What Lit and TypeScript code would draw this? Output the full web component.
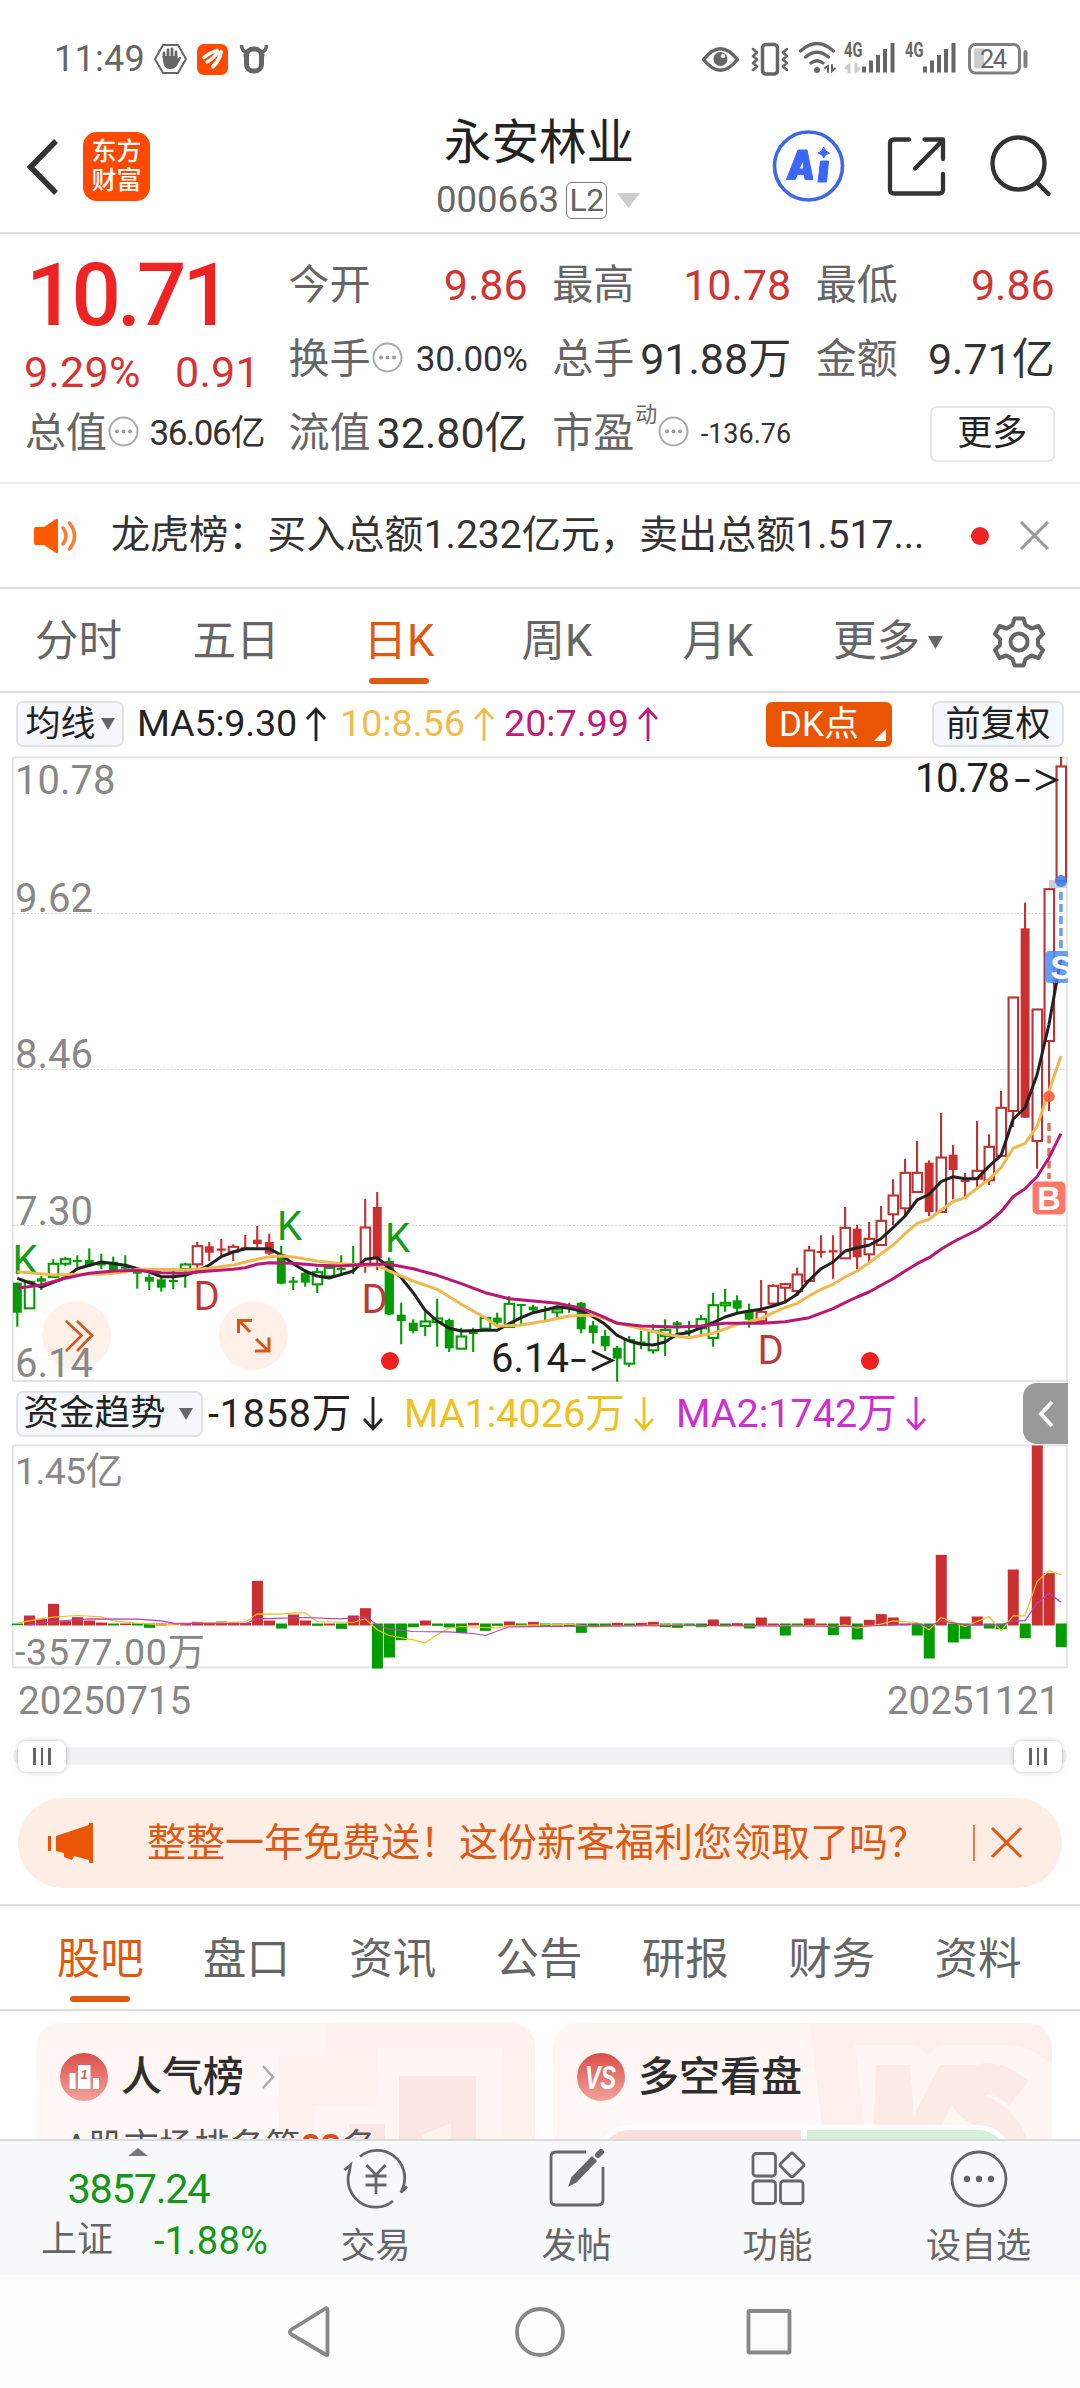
import { LitElement, html, svg, css } from "lit";
import { customElement, property } from "lit/decorators.js";
import { classMap } from "lit/directives/class-map.js";

const GREEN = "#009c00";
const RED = "#cb2f2f";

type Candle = [kind: string, top: number, bottom: number, high: number, low: number];

/* Levels are thirds of a pixel, measured down from the 7.66 level.
   F/f: falling solid/hollow, R/r: rising solid/hollow, x/X: cross. */
const CANDLES: Candle[] = [
  ["F", 425, 515, 425, 557], ["f", 422, 502, 418, 504], ["F", 412, 422, 405, 447], ["f", 367, 408, 355, 408],
  ["f", 353, 368, 347, 375], ["x", 360, 360, 343, 378], ["F", 357, 372, 322, 378], ["x", 370, 370, 338, 385],
  ["F", 362, 387, 347, 390], ["x", 380, 380, 343, 395], ["F", 390, 398, 385, 443], ["F", 408, 422, 400, 447],
  ["F", 415, 440, 405, 452], ["x", 420, 420, 380, 445], ["f", 369, 384, 365, 440], ["r", 314, 370, 303, 380],
  ["R", 316, 335, 303, 360], ["X", 326, 326, 293, 345], ["r", 316, 332, 310, 360], ["X", 322, 322, 282, 328],
  ["R", 296, 309, 255, 320], ["R", 303, 338, 278, 342], ["F", 340, 428, 315, 430], ["x", 422, 422, 408, 447],
  ["F", 395, 425, 385, 437], ["f", 392, 430, 380, 456], ["f", 379, 406, 375, 410], ["x", 384, 384, 343, 397],
  ["x", 370, 370, 315, 400], ["r", 258, 375, 173, 395], ["R", 198, 352, 153, 387], ["F", 360, 520, 350, 522],
  ["F", 521, 540, 485, 610], ["F", 545, 570, 535, 577], ["f", 540, 555, 512, 585], ["f", 531, 543, 473, 617],
  ["F", 537, 622, 533, 633], ["f", 585, 623, 560, 625], ["x", 576, 576, 560, 633], ["f", 529, 563, 527, 565],
  ["F", 530, 545, 515, 550], ["f", 487, 558, 465, 558], ["x", 492, 492, 490, 548], ["F", 497, 508, 492, 518],
  ["x", 507, 507, 495, 540], ["f", 504, 514, 500, 528], ["x", 495, 495, 485, 515], ["F", 485, 565, 483, 577],
  ["F", 553, 576, 540, 608], ["F", 585, 616, 567, 630], ["F", 620, 653, 615, 722], ["f", 596, 668, 585, 678],
  ["x", 605, 605, 570, 625], ["f", 570, 628, 550, 638], ["f", 565, 585, 535, 645], ["F", 544, 553, 540, 577],
  ["x", 571, 571, 540, 585], ["f", 533, 562, 522, 582], ["f", 491, 591, 455, 617], ["f", 484, 493, 443, 512],
  ["F", 478, 503, 463, 515], ["F", 511, 536, 488, 560], ["r", 511, 540, 417, 540], ["r", 433, 488, 430, 498],
  ["r", 428, 440, 425, 480], ["r", 399, 450, 380, 465], ["r", 327, 420, 315, 420], ["X", 333, 333, 283, 350],
  ["X", 331, 331, 283, 413], ["r", 259, 352, 198, 352], ["R", 263, 349, 252, 385], ["r", 292, 340, 243, 370],
  ["r", 238, 312, 195, 312], ["r", 162, 220, 115, 252], ["r", 94, 202, 53, 225], ["r", 94, 153, 0, 153],
  ["R", 65, 213, 58, 225], ["r", 48, 213, -85, 215], ["R", 41, 87, 12, 175], ["R", 115, 123, 96, 170],
  ["r", 88, 113, -60, 142], ["r", 16, 118, -20, 132], ["r", -101, 45, -150, 45], ["r", -432, -90, -433, -42],
  ["R", -638, -70, -715, -70], ["r", -396, 0, -397, 83], ["r", -757, -300, -758, -90], ["r", -1125, -780, -1152, -780],
];

type Pt = [number, number];
const MA5: Pt[] = [[0, 412], [2, 438], [4, 410], [5, 383], [7, 363], [9, 373], [11, 393], [12, 407], [13, 407], [14, 403], [15, 390], [16, 372], [17, 347], [18, 333], [19, 323], [21, 323], [22, 342], [23, 368], [24, 390], [25, 405], [26, 411], [28, 390], [29, 355], [30, 350], [31, 380], [32, 410], [33, 455], [34, 508], [35, 540], [36, 562], [37, 570], [39, 568], [40, 568], [41, 548], [42, 530], [43, 515], [44, 507], [45, 497], [46, 502], [47, 510], [48, 527], [49, 550], [50, 583], [51, 600], [52, 610], [53, 612], [54, 603], [55, 580], [56, 575], [57, 560], [58, 545], [59, 528], [60, 517], [61, 510], [62, 505], [63, 495], [64, 483], [65, 460], [66, 418], [67, 383], [68, 363], [69, 330], [70, 320], [71, 313], [72, 293], [73, 260], [74, 225], [75, 177], [76, 160], [77, 122], [78, 107], [79, 113], [80, 113], [81, 75], [82, 43], [83, -65], [84, -100], [85, -198], [86, -350], [87, -550]];
const MA10: Pt[] = [[0, 392], [3, 402], [5, 400], [7, 400], [9, 393], [10, 385], [12, 385], [14, 387], [16, 382], [18, 372], [20, 355], [21, 347], [22, 345], [23, 348], [25, 360], [27, 368], [29, 373], [30, 373], [31, 390], [33, 420], [35, 445], [37, 490], [38, 510], [39, 530], [40, 556], [42, 552], [44, 540], [46, 525], [48, 522], [50, 545], [52, 563], [54, 580], [56, 590], [58, 577], [60, 550], [62, 533], [63, 515], [64, 500], [65, 487], [66, 465], [67, 445], [68, 430], [69, 408], [70, 390], [71, 365], [72, 338], [73, 312], [74, 278], [75, 247], [76, 235], [77, 207], [78, 182], [79, 170], [80, 142], [81, 115], [82, 80], [83, 22], [84, 7], [85, -43], [86, -150], [87, -255]];
const MA20: Pt[] = [[0, 442], [2, 432], [4, 412], [6, 397], [8, 390], [10, 388], [12, 395], [14, 397], [16, 390], [18, 385], [19, 380], [20, 370], [21, 365], [23, 367], [25, 373], [27, 375], [29, 370], [31, 370], [33, 383], [35, 403], [37, 428], [39, 455], [41, 473], [43, 480], [45, 487], [47, 502], [48, 515], [49, 530], [50, 547], [52, 555], [55, 558], [57, 555], [59, 547], [61, 547], [62, 547], [64, 542], [66, 530], [68, 503], [69, 485], [70, 468], [71, 453], [72, 433], [73, 413], [74, 390], [75, 368], [76, 350], [77, 325], [78, 303], [79, 285], [80, 267], [81, 243], [82, 212], [83, 167], [84, 143], [85, 107], [86, 50], [87, -22]];

/* Net flow per day, in thirds of a pixel above the zero line. */
const FLOW = [-2, 27, 17, 62, 10, 22, 12, 6, -3, 2, -3, -10, 3, 2, 4, 8, 4, 9, 7, 5, 131, 12, -12, 30, 12, -4, 3, -13, 27, 49, -132, -99, -47, -8, 12, -4, -9, -26, 5, -19, -4, 9, -3, 8, -4, -3, -6, -25, -8, -4, 5, -3, 5, 8, -8, -10, -3, -8, 15, -6, 4, -12, 21, 3, -33, -3, 18, 3, -32, 24, -45, 14, 31, 21, 3, -33, -102, 209, -54, -43, 24, -12, -14, 165, -41, 537, 154, -68];
const FLOW_MA1: Pt[] = [[0, 4], [1, 11], [2, 17], [3, 22], [5, 27], [7, 23], [8, 11], [10, 4], [12, -1], [16, 6], [19, 7], [20, 32], [22, 31], [23, 35], [24, 35], [25, 9], [28, 6], [29, 17], [30, -16], [31, -33], [33, -46], [34, -55], [35, -31], [36, -11], [37, -6], [40, -11], [41, -3], [46, 1], [48, -7], [54, -1], [58, -4], [67, -3], [68, -8], [69, -1], [70, -11], [72, 1], [73, 11], [75, 6], [76, -16], [77, 21], [79, -6], [81, 24], [82, -19], [83, 26], [84, 26], [85, 129], [86, 161], [87, 149]];
const FLOW_MA2: Pt[] = [[1, -1], [3, 9], [6, 17], [10, 16], [12, 11], [13, 4], [19, 2], [20, 17], [24, 21], [27, 17], [29, 24], [30, -1], [31, -14], [33, -21], [36, -22], [38, -27], [39, -33], [41, -7], [47, -5], [58, -3], [70, -6], [75, 2], [76, -6], [77, 11], [79, -1], [82, -1], [83, 11], [84, 11], [85, 64], [86, 94], [87, 67]];

const xAt = (i: number) => 17.3 + i * 11.997;
const yAt = (v: number) => v / 3 + 386;
const yFlow = (v: number) => 180.5 - v / 3;
const line = (pts: Pt[], y: (v: number) => number) => pts.map(([i, v]) => `${xAt(i).toFixed(1)},${y(v).toFixed(1)}`).join(" ");

const arrow = (up: boolean) => html`<svg class="arrow" width="20" height="36" viewBox="0 0 20 36" fill="none" stroke="currentColor" stroke-width="2.8">
  ${up ? svg`<path d="M10 35V3M1 13l9-10 9 10" />` : svg`<path d="M10 1v32M1 23l9 10 9-10" />`}</svg>`;

const dots = html`<svg class="dots" width="31" height="31" viewBox="0 0 31 31"><circle cx="15.5" cy="15.5" r="14" fill="none" stroke="#aaa" stroke-width="2" /><g fill="#999"><circle cx="9" cy="15.5" r="1.9" /><circle cx="15.5" cy="15.5" r="1.9" /><circle cx="22" cy="15.5" r="1.9" /></g></svg>`;

const base = css`
  :host { display: block; font-family: Roboto, "Noto Sans CJK SC", sans-serif; line-height: 1; color: #333; }
  * { box-sizing: border-box; }
  svg { display: block; flex: none; }
`;

@customElement("status-bar")
class StatusBar extends LitElement {
  static styles = [base, css`
    .bar { height: 118px; padding: 0 48px 0 54px; display: flex; align-items: center; justify-content: space-between; color: #666; }
    .left { display: flex; align-items: center; }
    .time { font-size: 36px; width: 100px; letter-spacing: 0.3px; }
    text { font-family: Roboto, sans-serif; }
  `];
  render() {
    return html`<div class="bar">
      <div class="left">
        <span class="time">11:49</span>
        <svg width="115" height="34" viewBox="154 44 115 34">
          <path d="M163 47h15l8 14-8 14h-15l-8-14z" fill="none" stroke="#666" stroke-width="2" stroke-linejoin="round" />
          <path d="M164 60v-5M168 60v-8M172 60v-9M176 60v-6" stroke="#666" stroke-width="2.8" stroke-linecap="round" />
          <path d="M162.600 58h14.800v3l2-2q2-1 1.500 1.500l-4.500 8q-2 2.500-6 2.500-6 0-7-6z" fill="#666" />
          <rect x="197" y="46" width="31" height="31" rx="7" fill="#ff4a00" />
          <g fill="none" stroke="#fff" stroke-linecap="round"><path d="M204 59.500q5-4.500 13-7" stroke-width="3.500" /><path d="M207 64q6-3 11-10" stroke-width="3.500" /><path d="M213 68.500q6-5 8-14.500" stroke-width="4" /></g>
          <path d="M243.500 57h3M261 57h3.500" stroke="#666" stroke-width="3" /><rect x="246.500" y="51" width="15" height="22" rx="6.500" fill="none" stroke="#666" stroke-width="5" />
          <path d="M241.500 47q0 6 5 7M266.500 47q0 6-5 7" fill="none" stroke="#666" stroke-width="3.500" />
        </svg>
      </div>
      <svg width="332" height="40" viewBox="700 40 332 40" fill="none" stroke="#666" stroke-linecap="round">
        <path d="M703.500 60.500q17-21.500 34 0q-17 21.500-34 0z" stroke-width="3.300" stroke-linejoin="round" />
        <circle cx="720.500" cy="60" r="7" fill="#666" stroke="none" /><circle cx="723" cy="57" r="2.200" fill="#fff" stroke="none" />
        <rect x="762.500" y="45.500" width="15" height="29.500" rx="3.500" stroke-width="3.500" />
        <path d="M753 50l4 3.500-4 3.500 4 3.500-4 3.500 4 3.500-4 3.500M787 50l-4 3.500 4 3.500-4 3.500 4 3.500-4 3.500 4 3.500" stroke-width="2.500" stroke-linejoin="round" />
        <path d="M800.500 52q16.500-15 33 0M805.500 58q11.500-9.500 23 0M811 64q6-4.500 12 0" stroke-width="3.200" /><circle cx="817" cy="71" r="3" fill="#666" stroke="none" />
        <path d="M825 69l3-2v6M832 66v6l3-2.500" stroke-width="2" />
        <path d="M846 69l3-2.500v6.500M856 65v7l3-2.500" stroke="#ccc" stroke-width="3" />
        <g stroke="none" fill="#666" font-size="20" font-weight="700"><text x="844" y="57.500" textLength="18.500" lengthAdjust="spacingAndGlyphs">4G</text><text x="905" y="57.500" textLength="18.500" lengthAdjust="spacingAndGlyphs">4G</text></g>
        <path d="M864 67.500v6M871 61.500v12M878 56v17.500M885 50v23.500M892.500 44v29.500M925 67.500v6M932 61.500v12M939 56v17.500M946 50v23.500M953.500 44v29.500" stroke-width="4" stroke-linecap="butt" />
        <rect x="969.500" y="45.500" width="50" height="28.500" rx="6" stroke="#808080" stroke-width="3" />
        <path d="M976 49.500h8v20h-8q-2 0-2-2v-16q0-2 2-2z" fill="#ccc" stroke="none" />
        <path d="M1025.500 53v14" stroke="#808080" stroke-width="4" />
        <text x="980" y="69" font-size="25.500" fill="#666" stroke="none" textLength="27">24</text>
      </svg>
    </div>`;
  }
}

@customElement("stock-header")
class StockHeader extends LitElement {
  static styles = [base, css`
    .head { height: 116px; border-bottom: 2px solid #dcdcdc; display: grid; grid-template-columns: 300px 480px 300px; }
    .left { display: flex; align-items: center; padding: 0 0 17px 26px; gap: 24px; }
    .logo { width: 67px; height: 69px; border-radius: 14px; background: #ff4800; color: #fff; font-size: 25px; font-weight: 500; line-height: 29px; display: grid; place-content: center; text-align: center; padding-bottom: 2px; }
    .mid { display: flex; flex-direction: column; align-items: center; padding: 2px 2px 0 0; }
    .name { font-size: 47.500px; color: #222; font-weight: 400; }
    .code { display: flex; align-items: center; margin: 14px 0 0 -2px; font-size: 36.500px; color: #666; }
    .lv { width: 41px; height: 37px; border: 1.500px solid #777; border-radius: 6px; font-size: 32px; display: grid; place-content: center; margin: 0 10px 0 7px; letter-spacing: -0.500px; }
    .right { display: flex; justify-content: flex-end; padding: 10px 27px 0 0; }
  `];
  render() {
    return html`<div class="head">
      <div class="left">
        <svg width="33" height="56" viewBox="0 0 33 56" fill="none" stroke="#333" stroke-width="5.500"><path d="M30 2L4.500 28 30 54" /></svg>
        <div class="logo">东方<br />财富</div>
      </div>
      <div class="mid">
        <div class="name">永安林业</div>
        <div class="code">000663<span class="lv">L2</span><svg width="23" height="15" viewBox="0 0 23 15"><path d="M0 0h23L11.500 15z" fill="#ccc" /></svg></div>
      </div>
      <div class="right">
        <svg width="281" height="76" viewBox="772 128 281 76" fill="none">
          <circle cx="808.500" cy="166" r="34" stroke="#3f68e8" stroke-width="3.600" />
          <path d="M798 150h9l6 29.500h-8l-.500-5h-7l-2.500 5h-8.500zM799 169h4.800l-.6-9zM820.500 161h8l-2 21h-8.500zM823.700 147q1 5 5.800 6-4.800 1-5.800 5-1-4-5.500-5 4.500-1 5.500-6z" fill="#3a66fa" stroke="#3a66fa" stroke-width="1" stroke-linejoin="round" />
          <g stroke="#333" stroke-width="4.300" stroke-linecap="round" stroke-linejoin="round"><path d="M909 139.500h-15q-4 0-4 4v46q0 4 4 4h45q4 0 4-4v-15.500M924.500 139.500h18.500v19.500M942 141l-27 27.500" />
          <circle cx="1018.500" cy="163.500" r="26" /><path d="M1037 182.500l11.500 11.500" /></g>
        </svg>
      </div>
    </div>`;
  }
}

@customElement("quote-panel")
class QuotePanel extends LitElement {
  static styles = [base, css`
    .grid { height: 250px; padding: 14px 25px 0 26px; border-bottom: 2px solid #efefef; display: grid; grid-template-columns: repeat(4, 238px); grid-template-rows: repeat(3, 74px); column-gap: 25.600px; }
    .main { grid-row: 1 / 3; display: flex; flex-direction: column; color: #ee2424; }
    .price { font-size: 87px; font-weight: 500; letter-spacing: -4px; padding-top: 4px; height: 103px; }
    .chg { display: flex; justify-content: space-between; width: 236px; font-size: 43px; color: #d63333; margin-left: -2px; letter-spacing: 0.300px; }
    .cell { display: flex; align-items: center; padding-top: 1px; }
    .label { font-size: 41px; color: #666; margin-left: -1px; }
    .value { margin-left: auto; font-size: 43px; }
    .up { color: #cf3535; }
    .small { font-size: 35px; letter-spacing: -0.300px; }
    .value.narrow { font-size: 35px; letter-spacing: -1.400px; }
    .tiny { font-size: 27px; margin-top: 2px; }
    .dots { margin: -4px 0 0 1px; }
    .sup { font-size: 22px; color: #666; align-self: flex-start; margin: 7px 0 0 1px; }
    .more { margin-left: auto; width: 125px; height: 56px; border: 2px solid #e8e8e8; border-radius: 7px; font-size: 35px; display: grid; place-content: center; color: #222; }
  `];
  cell(label: string, value: string, size = "", up = false, info = false) {
    return html`<div class="cell"><span class="label">${label}</span>${info ? dots : ""}<span class=${classMap({ value: true, up, [size || "std"]: true })}>${value}</span></div>`;
  }
  render() {
    return html`<div class="grid">
      <div class="main"><div class="price">10.71</div><div class="chg"><span>9.29%</span><span>0.91</span></div></div>
      ${this.cell("今开", "9.86", "", true)}${this.cell("最高", "10.78", "", true)}${this.cell("最低", "9.86", "", true)}
      ${this.cell("换手", "30.00%", "small", false, true)}${this.cell("总手", "91.88万")}${this.cell("金额", "9.71亿")}
      ${this.cell("总值", "36.06亿", "narrow", false, true)}${this.cell("流值", "32.80亿")}
      <div class="cell"><span class="label">市盈</span><span class="sup">动</span>${dots}<span class="value tiny">-136.76</span></div>
      <div class="cell"><span class="more">更多</span></div>
    </div>`;
  }
}

@customElement("news-strip")
class NewsStrip extends LitElement {
  static styles = [base, css`
    .strip { height: 105px; border-bottom: 2px solid #dcdcdc; padding: 0 30px 0 34px; display: flex; align-items: center; }
    .text { font-size: 39.100px; margin-left: 33px; width: 860px; white-space: nowrap; }
    .dot { width: 18px; height: 18px; border-radius: 50%; background: #ee2424; margin-right: 30px; }
  `];
  render() {
    return html`<div class="strip">
      <svg width="44" height="36" viewBox="0 0 44 36"><path d="M2 9h8L22 1q2-1 2 1v32q0 2-2 1L10 27H2q-2 0-2-2V11q0-2 2-2z" fill="#ff5a00" /><path d="M29 10q6 8 0 16M35.500 5q10 13 0 26" fill="none" stroke="#ff7a33" stroke-width="3.500" stroke-linecap="round" /></svg>
      <span class="text">龙虎榜：买入总额1.232亿元，卖出总额1.517...</span>
      <span class="dot"></span>
      <svg width="31" height="29" viewBox="0 0 31 29"><path d="M2 1l27 27M29 1L2 28" stroke="#999" stroke-width="3" /></svg>
    </div>`;
  }
}

@customElement("tab-row")
class TabRow extends LitElement {
  @property({ type: Array }) items: string[] = [];
  @property({ type: Number }) active = 0;
  @property({ type: Boolean, reflect: true }) period = false;
  static styles = [base, css`
    .tabs { height: 105px; border-bottom: 2px solid #dcdcdc; display: grid; grid-template-columns: repeat(7, 146.300px); padding-left: 27px; color: #666; font-size: 43.500px; }
    :host([period]) .tabs { height: 104px; grid-template-columns: 157px 158px 168px 148px 174px 166px 95px; padding-left: 0; }
    .tab { position: relative; display: flex; align-items: center; justify-content: center; gap: 8px; padding-top: 4px; }
    .tab.on { color: #e0590f; }
    .tab.on::after { content: ""; position: absolute; left: calc(50% - 30px); bottom: 7px; width: 60px; height: 6px; border-radius: 3px; background: #e0590f; }
  `];
  render() {
    return html`<div class="tabs">
      ${this.items.map((t, i) => html`<div class=${classMap({ tab: true, on: i === this.active })}>${t}${this.period && i === 5
        ? html`<svg width="15" height="13" viewBox="0 0 15 13"><path d="M0 0h15L7.500 13z" fill="#666" /></svg>` : ""}</div>`)}
      ${this.period ? html`<div class="tab"><svg width="54" height="54" viewBox="-27 -27 54 54" fill="none" stroke="#666" stroke-width="4" stroke-linejoin="round"><path d="M-4.500 -23.500h9l2 6.500 6 3.500 7-2.500 4.500 8-5 5v6l5 5-4.500 8-7-2.500-6 3.500-2 6.500h-9l-2-6.500-6-3.500-7 2.500-4.500-8 5-5v-6l-5-5 4.500-8 7 2.500 6-3.500z" /><circle r="8.500" /></svg></div>` : ""}
    </div>`;
  }
}

@customElement("k-chart")
class KChart extends LitElement {
  static styles = [base, css`
    .row { display: flex; align-items: center; padding-left: 16px; white-space: nowrap; font-size: 37.700px; color: #222; }
    .ma { height: 62px; }
    .fund { height: 61px; font-size: 39.500px; }
    .btn { height: 46px; border: 2px solid #e2e3e8; border-radius: 7px; background: #f6f7fa; font-size: 35px; display: flex; align-items: center; justify-content: center; gap: 5px; }
    .b1 { width: 108px; }
    .b2 { width: 132px; margin-left: 40px; }
    .b3 { width: 187px; gap: 13px; font-size: 35.500px; padding-right: 3px; }
    .dk { width: 126px; height: 45px; border-radius: 6px; background: #ea5504; color: #fff; font-size: 35px; display: flex; align-items: center; margin-left: auto; padding-left: 13px; position: relative; }
    .dk svg { position: absolute; right: 6px; bottom: 6px; }
    .ma .b2 { margin-right: 16px; }
    .v { display: flex; align-items: center; gap: 9px; }
    .v1 { width: 203px; margin-left: 13px; letter-spacing: -0.200px; }
    .v2 { width: 164px; color: #f0bc4e; }
    .v3 { color: #be1c78; }
    .f1 { width: 196px; margin-left: 5px; gap: 11px; letter-spacing: 0.800px; }
    .f2 { width: 272px; color: #eec11e; }
    .f3 { color: #cf2fcf; }
    .fold { width: 45px; height: 61px; border-radius: 14px 0 0 14px; background: #999; margin: 0 12px 0 auto; display: grid; place-content: center; }
    .axis { font-size: 40px; fill: #888; }
    .unit { font-size: 37.500px; }
    .note { font-size: 40px; fill: #222; }
    .k { font-size: 40px; fill: #159c15; }
    .d { font-size: 40px; fill: #bc3a3a; }
    .tag { font-family: "Liberation Sans", sans-serif; font-weight: 700; font-size: 33px; fill: #fff; }
    .dates { display: flex; justify-content: space-between; align-items: center; height: 59px; padding: 1px 20px 0 18px; font-size: 38.500px; color: #888; }
    .slider { height: 52px; padding: 0 13px; display: flex; align-items: center; }
    .track { flex: 1; height: 18px; border-radius: 9px; background: #f1f1f3; display: flex; align-items: center; justify-content: space-between; padding: 0 5px; }
    .knob { width: 48px; height: 31px; border-radius: 8px; background: #fff; box-shadow: 0 0 5px rgba(0, 0, 0, 0.250); display: flex; align-items: center; justify-content: center; gap: 5px; }
    .knob i { width: 2.500px; height: 17px; background: #666; }
  `];

  candle([kind, top, bottom, high, low]: Candle, i: number) {
    const x = xAt(i);
    const green = "Ffx".includes(kind);
    const c = green ? GREEN : RED;
    const t = yAt(top), b = yAt(bottom), h = yAt(high), l = yAt(low);
    if (kind === "x" || kind === "X")
      return svg`<path d="M${x} ${h}V${l}M${x - 4.5} ${t}h9" stroke=${c} stroke-width="2.100" />`;
    if (kind === "F" || kind === "R")
      return svg`<path d="M${x} ${h}V${l}" stroke=${c} stroke-width="2.100" /><rect x=${x - 4.4} y=${t} width="8.900" height=${b - t} fill=${c} />`;
    return svg`<g fill="none" stroke=${green ? GREEN : "#b93434"} stroke-width="2.100"><path d="M${x} ${h}V${t}M${x} ${b}V${l}" /><rect x=${x - 4.5} y=${t + 0.5} width="9.500" height=${Math.max(1.500, b - t - 0.5)} /></g>`;
  }

  render() {
    const tri = html`<svg width="14" height="12" viewBox="0 0 14 12"><path d="M0 0h14L7 12z" fill="#666" /></svg>`;
    return html`
      <div class="row ma">
        <span class="btn b1">均线${tri}</span>
        <span class="v v1">MA5:9.30${arrow(true)}</span><span class="v v2">10:8.56${arrow(true)}</span><span class="v v3">20:7.99${arrow(true)}</span>
        <span class="dk">DK点<svg width="12" height="12" viewBox="0 0 12 12"><path d="M12 0v12H0z" fill="#fff" /></svg></span>
        <span class="btn b2">前复权</span>
      </div>
      <svg width="1080" height="628" viewBox="0 0 1080 628">
        <path d="M12.500 2.500H1067.500M12.500 626H1067.500" stroke="#e2e2e2" stroke-width="2" /><path d="M12.800 2V626M1067 2V626" stroke="#e2e2e2" stroke-width="1.600" />
        <path d="M13 158.500H1067M13 314.500H1067M13 470.500H1067" stroke="#d4d4d4" stroke-width="1" stroke-dasharray="2 1.500" />
        <circle cx="76.500" cy="580.500" r="34.500" fill="#fff1ea" /><circle cx="253.500" cy="580.500" r="34.500" fill="#fff1ea" />
        <path d="M66 566l15.500 14.500L66 596M77 566l15 14.500L77 596" fill="none" stroke="#d0591c" stroke-width="2.600" />
        <path d="M250 577l-11-11.500M238.500 578v-12.500h13.500M256 584l12 11.500M269 582.500v13.500h-14" fill="none" stroke="#d9580f" stroke-width="3" />
        <text class="axis" x="15" y="38.500">10.78</text><text class="axis" x="15" y="157">9.62</text><text class="axis" x="15" y="313">8.46</text><text class="axis" x="15" y="469.500">7.30</text><text class="axis" x="15" y="621.500">6.14</text>
        <rect x="1049" y="125" width="18" height="8" fill="#ccd0d4" />
        ${CANDLES.map((c, i) => this.candle(c, i))}
        <text class="k" x="12.500" y="519">K</text><text class="k" x="277" y="485">K</text><text class="k" x="385" y="497">K</text>
        <text class="d" x="193.500" y="555">D</text><text class="d" x="361.500" y="558">D</text><text class="d" x="757.500" y="609">D</text>
        ${this.candle(CANDLES[31], 31)}
        <text class="note" x="915" y="37" textLength="95">10.78</text><path d="M1015.500 25.500h14M1036 15.500l20 9.500-20 9.500" fill="none" stroke="#222" stroke-width="2.800" />
        <text class="note" x="491" y="617" textLength="78">6.14</text><path d="M571.500 605.500h14M592 596l20 9.500-20 9.500" fill="none" stroke="#222" stroke-width="2.800" />
        <path d="M1049 368v56" stroke="#e87060" stroke-width="3.500" stroke-dasharray="8 4.500" />
        <rect x="1044.500" y="196" width="22.500" height="32" rx="5" fill="#4f8df0" opacity=".5" />
        <g fill="none" stroke-width="3" stroke-linejoin="round">
          <polyline points=${line(MA5, yAt)} stroke="#222" />
          <polyline points=${line(MA10, yAt)} stroke="#f0b84e" />
          <polyline points=${line(MA20, yAt)} stroke="#bb1874" />
        </g>
        <path d="M1061 137v56" stroke="#669ee8" stroke-width="3.500" stroke-dasharray="8 4" />
        <circle cx="1061" cy="126" r="6" fill="#4080ea" opacity=".9" />
        <path d="M1068 196h-18q-5 0-5 5v22q0 5 5 5h18z" fill="#4f90f6" opacity=".75" />
        <svg x="1044" y="190" width="24" height="42"><text class="tag" x="6.500" y="33.500">S</text></svg>
        <circle cx="1049" cy="341.500" r="5.800" fill="#ff5a38" opacity=".88" />
        <rect x="1032.500" y="426.500" width="33" height="33" rx="5" fill="#fb7868" /><text class="tag" x="1037" y="455">B</text>
        <circle cx="390" cy="606" r="9" fill="#f02020" /><circle cx="870" cy="606" r="9" fill="#f02020" />
      </svg>
      <div class="row fund">
        <span class="btn b3">资金趋势${tri}</span>
        <span class="v f1">-1858万${arrow(false)}</span><span class="v f2">MA1:4026万${arrow(false)}</span><span class="v f3">MA2:1742万${arrow(false)}</span>
        <span class="fold"><svg width="18" height="28" viewBox="0 0 18 28" fill="none" stroke="#fff" stroke-width="4"><path d="M15 2L4 14l11 12" /></svg></span>
      </div>
      <svg width="1080" height="227" viewBox="0 0 1080 227">
        <path d="M12.500 1.500H1067.500M12.500 223.500H1067.500" stroke="#e2e2e2" stroke-width="2" /><path d="M12.800 1V224M1067 1V224" stroke="#e2e2e2" stroke-width="1.600" />
        <text class="axis unit" x="15" y="40" textLength="108">1.45亿</text><text class="axis unit" x="15" y="220.500" textLength="190">-3577.00万</text>
        ${FLOW.map((v, i) => svg`<rect x=${xAt(i) - 5.3} y=${Math.min(yFlow(v), 179.500)} width="11" height=${Math.abs(v) / 3 + 1} fill=${v > 0 ? RED : GREEN} />`)}
        <g fill="none" stroke-width="1.200"><polyline points=${line(FLOW_MA1, yFlow)} stroke="#eec11e" /><polyline points=${line(FLOW_MA2, yFlow)} stroke="#b63fb6" /></g>
      </svg>
      <div class="dates"><span>20250715</span><span>20251121</span></div>
      <div class="slider"><div class="track"><span class="knob"><i></i><i></i><i></i></span><span class="knob"><i></i><i></i><i></i></span></div></div>
    `;
  }
}

@customElement("promo-banner")
class PromoBanner extends LitElement {
  static styles = [base, css`
    .wrap { height: 124px; padding: 16px 18px 0; border-bottom: 2px solid #dcdcdc; }
    .pill { height: 90px; border-radius: 45px; background: #fdede4; color: #dc5a14; display: flex; align-items: center; padding: 0 37px 0 30px; }
    .text { font-size: 39px; margin-left: 54px; width: 827px; white-space: nowrap; }
  `];
  render() {
    return html`<div class="wrap"><div class="pill">
      <svg width="45" height="40" viewBox="0 0 45 40" fill="#ea5504"><path d="M0 13h3v15H0zM8 13L41 2V0h4v40h-4v-3l-15-4-2 4-8-3v-4l-8-2z" /></svg>
      <span class="text">整整一年免费送！这份新客福利您领取了吗？</span>
      <svg width="52" height="36" viewBox="0 0 52 36" stroke="#dc5a14" fill="none"><path d="M1 0v36" stroke-width="1.500" /><path d="M19 3l29 29M48 3L19 32" stroke-width="3" /></svg>
    </div></div>`;
  }
}

@customElement("feature-cards")
class FeatureCards extends LitElement {
  static styles = [base, css`
    .cards { height: 128px; padding: 12px 28px 0 36px; display: grid; grid-template-columns: 499px 499px; gap: 18px; overflow: hidden; }
    .card { position: relative; height: 240px; border-radius: 24px; background: linear-gradient(#fff6f4, #fffaf8); overflow: hidden; padding: 30px 24px 0; }
    .deco { position: absolute; right: 0; top: 0; }
    .title { position: relative; display: flex; align-items: center; gap: 13px; font-size: 41px; font-weight: 500; color: #2e2e2e; height: 48px; }
    .title .chev { margin-left: 4px; }
    .rank { position: relative; font-size: 35px; color: #555; margin: 29px 0 0 5px; letter-spacing: 0.400px; }
    .rank b { color: #e04a1a; font-weight: 700; }
    .meter { position: relative; display: flex; gap: 6px; height: 70px; margin: 24px 15px 0 18px; border: 5px solid #fff; border-radius: 40px; overflow: hidden; background: #fff; }
    .meter i { flex: 1; background: #fcdedb; }
    .meter .g { background: #d6efdc; }
    text { font-family: "Liberation Sans", sans-serif; font-weight: 700; font-style: italic; }
  `];
  render() {
    return html`<div class="cards">
      <div class="card">
        <svg class="deco" width="260" height="120" viewBox="276 22 260 120"><path d="M326 22h210v120H280V55h46z" fill="#fdeeeb" opacity=".7" /><path d="M314 142v-38h64V47h126v95z" fill="#fff6f3" /><path d="M350 123h36v19h-36zM400 75h77v67h-77z" fill="#fce6e3" /><path d="M423 134l29-12v20h-29z" fill="#fff3f0" /></svg>
        <div class="title">
          <svg width="48" height="48" viewBox="0 0 48 48"><defs><linearGradient id="g" x2="0" y2="1"><stop stop-color="#d94f48" /><stop offset="1" stop-color="#f3a29c" /></linearGradient></defs><circle cx="24" cy="24" r="24" fill="url(#g)" /><path d="M9.500 20h6v16H9.500zM18 12h12.500v24H18zM33 25h6v11h-6z" fill="#fff" /><text x="20.500" y="26" font-size="13" fill="#d9605a">1</text></svg>
          <span>人气榜</span>
          <svg class="chev" width="14" height="24" viewBox="0 0 14 24" fill="none" stroke="#aaa" stroke-width="2.500"><path d="M2 1l10 11L2 23" /></svg>
        </div>
        <div class="rank">A股市场排名第<b>83</b>名</div>
      </div>
      <div class="card">
        <svg class="deco" width="244" height="120" viewBox="808 22 244 120"><path d="M810 22h242v120H824z" fill="#fdefec" /><path d="M855 44h60l12 10 14-10h60q30 0 51 20v78H866z" fill="#fff5f2" /><path d="M876 64h34l4 50 26-50h35q-2 6-6 4l-36 74h-60z" fill="#fceae7" /><path d="M1019 92q-30-24-47-8t14 28q20 12 26 30" fill="none" stroke="#fceae7" stroke-width="31" /></svg>
        <div class="title">
          <svg width="48" height="48" viewBox="0 0 48 48"><defs><linearGradient id="h" x2="0" y2="1"><stop stop-color="#d94f48" /><stop offset="1" stop-color="#f3a29c" /></linearGradient></defs><circle cx="24" cy="24" r="24" fill="url(#h)" /><text x="8" y="36" font-size="33" fill="#fff" textLength="31" lengthAdjust="spacingAndGlyphs">VS</text></svg>
          <span>多空看盘</span>
        </div>
        <div class="meter"><i></i><i class="g"></i></div>
      </div>
    </div>`;
  }
}

@customElement("bottom-bar")
class BottomBar extends LitElement {
  static styles = [base, css`
    .bar { height: 136px; background: #f6f8fa; border-top: 2px solid #d9dadc; display: grid; grid-template-columns: 276px repeat(4, 201px); color: #666; }
    .index { color: #179617; display: flex; flex-direction: column; align-items: center; padding-top: 7px; }
    .val { font-size: 41.500px; letter-spacing: -1.300px; margin: 12px 0 0 1px; }
    .line { display: flex; align-self: flex-start; font-size: 36px; margin: 12px 0 0 41px; letter-spacing: 0.300px; }
    .line span:first-child { color: #666; width: 113px; letter-spacing: 0; }
    .line span:last-child { font-size: 38px; }
    .item { display: flex; flex-direction: column; align-items: center; padding: 8px 2px 0 0; gap: 20px; font-size: 35px; }
    .nav { height: 114px; background: #fcfcfc; }
  `];
  render() {
    const item = (icon: unknown, label: string) => html`<div class="item"><svg width="66" height="60" viewBox="-33 -30 66 60" fill="none" stroke="#666" stroke-width="2.800">${icon}</svg>${label}</div>`;
    return html`<div class="bar">
      <div class="index">
        <svg width="20" height="8" viewBox="0 0 20 8"><path d="M10 0l10 8H0z" fill="#777" /></svg>
        <div class="val">3857.24</div>
        <div class="line"><span>上证</span><span>-1.88%</span></div>
      </div>
      ${item(svg`<path d="M-16 -22.500A27.500 27.500 0 0 1 27 8.500l-2 5 6-6M17 22A27.500 27.500 0 0 1 -26.500 -8l1-6-6 5" /><path d="M-9.500 -14L0 -4 9.500 -14M0 -4V15M-10.500 -3h21M-10.500 6h21" />`, "交易")}
      ${item(svg`<path d="M9 -27h-30q-5 0-5 5v43q0 5 5 5h42q5 0 5-5v-33" /><path d="M-9 8l3.500-10L15 -23l5 5L0 3z" fill="#666" stroke="none" /><path d="M21 -24l3-3" stroke-width="6" stroke-linecap="round" />`, "发帖")}
      ${item(svg`<rect x="-25" y="-25.500" width="22.500" height="22.500" rx="3" /><rect x="-25" y="2" width="22.500" height="22.500" rx="3" /><rect x="2.500" y="2" width="22.500" height="22.500" rx="3" /><rect x="5" y="-23" width="18" height="18" rx="2.500" transform="rotate(45 14 -14)" />`, "功能")}
      ${item(svg`<circle r="27" /><g fill="#666" stroke="none"><circle cx="-12" r="3.200" /><circle r="3.200" /><circle cx="12" r="3.200" /></g>`, "设自选")}
    </div>
    <div class="nav"><svg width="1080" height="114" viewBox="0 2274 1080 114" fill="none" stroke="#888" stroke-width="3.800" stroke-linejoin="round">
      <path d="M327.500 2309.500v43.500q0 2-2 .500l-34-20q-3.500-2.500 0-5l34-21q2-1 2 2z" /><circle cx="540" cy="2331" r="23" /><rect x="748.500" y="2310" width="41" height="41.500" rx="1" />
    </svg></div>`;
  }
}

@customElement("app-root")
class AppRoot extends LitElement {
  static styles = [base, css`
    :host { width: 1080px; height: 2388px; overflow: hidden; background: #fff; }
  `];
  render() {
    return html`<status-bar></status-bar>
      <stock-header></stock-header>
      <quote-panel></quote-panel>
      <news-strip></news-strip>
      <tab-row period .items=${["分时", "五日", "日K", "周K", "月K", "更多"]} .active=${2}></tab-row>
      <k-chart></k-chart>
      <promo-banner></promo-banner>
      <tab-row .items=${["股吧", "盘口", "资讯", "公告", "研报", "财务", "资料"]} .active=${0}></tab-row>
      <feature-cards></feature-cards>
      <bottom-bar></bottom-bar>`;
  }
}
